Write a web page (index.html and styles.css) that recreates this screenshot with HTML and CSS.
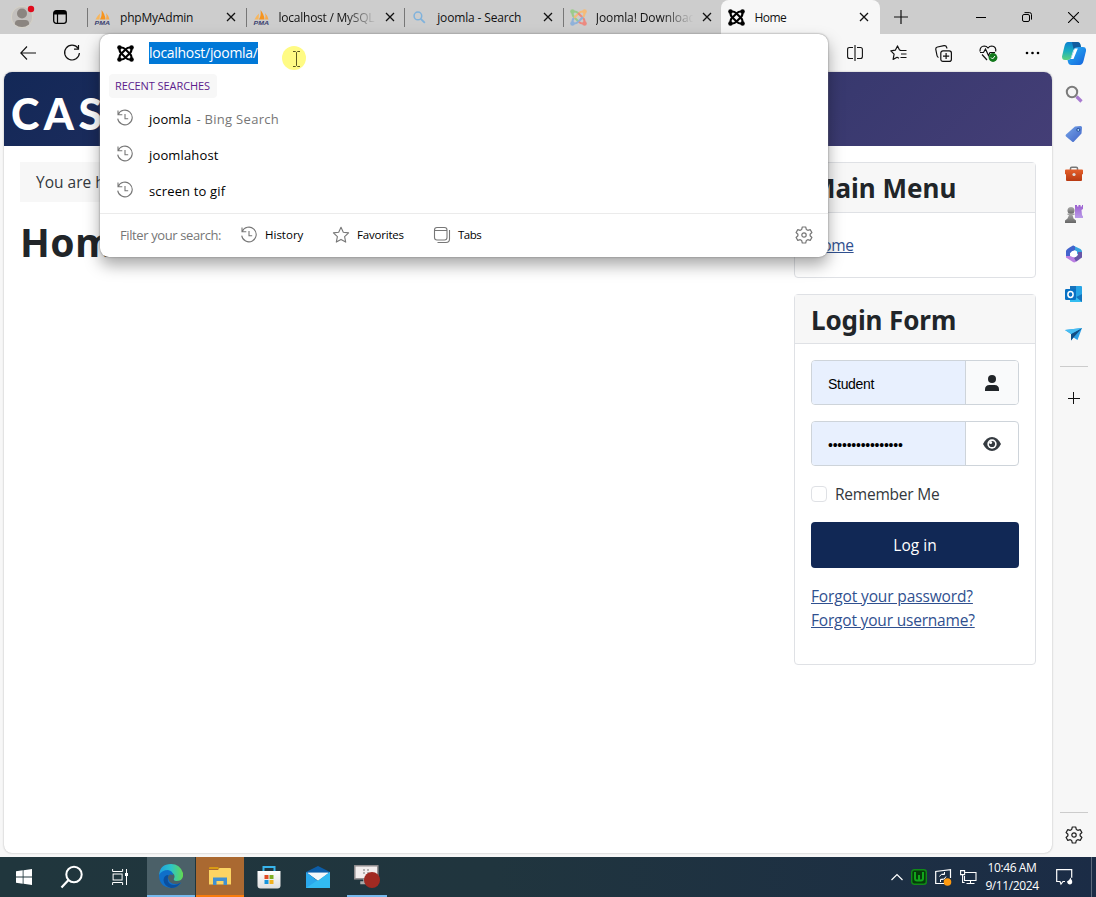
FILE: index.html
```html
<!DOCTYPE html>
<html lang="en">
<head>
<meta charset="utf-8">
<title>Home</title>
<link rel="stylesheet" href="styles.css">
</head>
<body>
<svg class="defs" aria-hidden="true">
  <defs>
    <symbol id="close" viewBox="0 0 10 10"><path d="M1 1l8 8M9 1l-8 8" fill="none" stroke="#111" stroke-width="1.3"/></symbol>
    <symbol id="joomla" viewBox="0 0 16 16">
      <g fill="none" stroke-width="1.9">
        <path d="M2.500 2.500Q1.800 5.600 3.700 7.500L8.500 12.300" stroke="var(--j1,#000)"/>
        <path d="M13.500 2.500Q10.400 1.800 8.500 3.700L3.700 8.500" stroke="var(--j2,#000)"/>
        <path d="M13.500 13.500Q14.200 10.400 12.300 8.500L7.500 3.700" stroke="var(--j3,#000)"/>
        <path d="M2.500 13.500Q5.600 14.200 7.500 12.300L12.300 7.500" stroke="var(--j4,#000)"/>
        <path d="M2.500 2.500Q5.600 1.800 7.500 3.700" stroke="var(--j1,#000)"/>
        <path d="M13.500 2.500Q14.200 5.600 12.300 7.500" stroke="var(--j2,#000)"/>
        <path d="M13.500 13.500Q10.400 14.200 8.500 12.300" stroke="var(--j3,#000)"/>
        <path d="M2.500 13.500Q1.800 10.400 3.700 8.500" stroke="var(--j4,#000)"/>
      </g>
      <circle cx="2.300" cy="2.300" r="2.100" fill="var(--j1,#000)"/><circle cx="13.700" cy="2.300" r="2.100" fill="var(--j2,#000)"/>
      <circle cx="13.700" cy="13.700" r="2.100" fill="var(--j3,#000)"/><circle cx="2.300" cy="13.700" r="2.100" fill="var(--j4,#000)"/>
    </symbol>
    <symbol id="pma" viewBox="0 0 17 17">
      <path d="M1.500 10.500Q3 7 6 4.500L5.500 10.500z" fill="#f8b65c"/><path d="M6 10.500Q8.500 6 7.500 1Q11 5 11.500 10.500z" fill="#f7941d"/><path d="M12 10.500Q13 7 12 4Q15 7 15.500 10.500z" fill="#f8a94a"/>
      <text x="0.500" y="15.500" font-family="Liberation Sans" font-size="6" font-weight="bold" font-style="italic" textLength="15.500" lengthAdjust="spacingAndGlyphs" fill="#3a3f70">PMA</text>
    </symbol>
    <symbol id="history" viewBox="0 0 18 18">
      <path d="M2.200 5.600A7.300 7.300 0 1 1 1.700 9.600M2 1.500v4.300h4.300M9 5v4.700h3.200" fill="none" stroke="#777" stroke-width="1.100"/>
    </symbol>
    <symbol id="gear" viewBox="0 0 18 18">
      <path d="M7.300 1h3.400l.6 2.400 1.500.9 2.400-.7 1.700 2.900-1.800 1.700v1.600l1.800 1.700-1.700 2.900-2.400-.7-1.500.9-.6 2.400H7.300l-.6-2.400-1.500-.9-2.400.7-1.700-2.900 1.800-1.700V8.200L1.100 6.500l1.700-2.900 2.400.7 1.500-.9z" fill="none" stroke="currentColor" stroke-width="1.200" stroke-linejoin="round"/>
      <circle cx="9" cy="9" r="2.200" fill="none" stroke="currentColor" stroke-width="1.200"/>
    </symbol>
    <linearGradient id="gCop1" x1="0" y1="0" x2="0" y2="1"><stop offset="0" stop-color="#0b7fd0"/><stop offset=".5" stop-color="#19aec0"/><stop offset="1" stop-color="#5fd37c"/></linearGradient>
    <linearGradient id="gCop2" x1="0" y1="0" x2="1" y2="1"><stop offset="0" stop-color="#28b8f5"/><stop offset="1" stop-color="#1560dc"/></linearGradient>
    <linearGradient id="gTag" x1="0" y1="0" x2="1" y2="1"><stop offset="0" stop-color="#77a6e8"/><stop offset="1" stop-color="#3f63c8"/></linearGradient>
    <linearGradient id="gRed" x1="0" y1="0" x2="0" y2="1"><stop offset="0" stop-color="#e4602b"/><stop offset="1" stop-color="#b83a12"/></linearGradient>
    <linearGradient id="gPawn" x1="0" y1="0" x2="0" y2="1"><stop offset="0" stop-color="#aaa"/><stop offset="1" stop-color="#666"/></linearGradient>
    <linearGradient id="gRook" x1="0" y1="0" x2="0" y2="1"><stop offset="0" stop-color="#9b5fd0"/><stop offset="1" stop-color="#b99be8"/></linearGradient>
    <linearGradient id="gEdge" x1="0" y1="0" x2="1" y2="0"><stop offset="0" stop-color="#1e9fe0"/><stop offset=".5" stop-color="#2dc4c9"/><stop offset="1" stop-color="#63d94f"/></linearGradient>
    <linearGradient id="gBag" x1="0" y1="0" x2="0" y2="1"><stop offset="0" stop-color="#fff"/><stop offset="1" stop-color="#ddd"/></linearGradient>
  </defs>
</svg>

<div class="browser">
  <div class="tabstrip">
    <div class="profile"><svg width="26" height="24" viewBox="0 0 26 24"><circle cx="11" cy="12" r="10.700" fill="#c3c0bd" stroke="#d6d3c8"/><circle cx="11" cy="8.500" r="5" fill="#8b8580"/><path d="M4 19.500Q3.500 15 7.500 15h7Q18.500 15 18 19.500 11 24.500 4 19.500z" fill="#8b8580"/><circle cx="20" cy="4" r="3.200" fill="#e00b1c"/></svg></div>
    <div class="workspaces"><svg width="14" height="14" viewBox="0 0 14 14"><rect x=".7" y=".7" width="12.600" height="12.600" rx="2.500" fill="none" stroke="#000" stroke-width="1.300"/><path d="M1 1h12v3.500H1z"/><path d="M4.500 4v9" stroke="#000" stroke-width="1.200"/></svg></div>
    <div class="tab"><svg class="fav"><use href="#pma"/></svg><span class="title t1">phpMyAdmin</span><svg class="x"><use href="#close"/></svg></div>
    <div class="tab"><svg class="fav"><use href="#pma"/></svg><span class="title fade t2">localhost / MySQL</span><svg class="x"><use href="#close"/></svg></div>
    <div class="tab"><svg class="fav" viewBox="0 0 16 16"><circle cx="6.500" cy="6.500" r="3.600" fill="none" stroke="#7fb2dc" stroke-width="1.400"/><path d="M9.200 9.200L13 13" stroke="#7fb2dc" stroke-width="1.700"/></svg><span class="title t3">joomla - Search</span><svg class="x"><use href="#close"/></svg></div>
    <div class="tab"><svg class="fav color"><use href="#joomla"/></svg><span class="title fade t4">Joomla! Download</span><svg class="x"><use href="#close"/></svg></div>
    <div class="tab active"><svg class="fav"><use href="#joomla"/></svg><span class="title t5">Home</span><svg class="x"><use href="#close"/></svg></div>
    <div class="newtab"><svg width="14" height="14" viewBox="0 0 14 14"><path d="M7 0v14M0 7h14" stroke="#111" stroke-width="1.200"/></svg></div>
    <div class="winctl">
      <svg width="10" height="10" viewBox="0 0 10 10"><path d="M0 5.500h10" stroke="#000"/></svg>
      <svg width="10" height="10" viewBox="0 0 10 10"><rect x=".5" y="2.500" width="7" height="7" rx="1.500" fill="none" stroke="#000"/><path d="M2.500.6h5q2 0 2 2v5" fill="none" stroke="#000"/></svg>
      <svg width="11" height="11" viewBox="0 0 10 10"><path d="M0 0l10 10M10 0L0 10" stroke="#000"/></svg>
    </div>
  </div>

  <div class="body">
    <div class="main">
      <div class="toolbar">
        <svg width="16" height="14" viewBox="0 0 16 14"><path d="M7 .5L.8 7 7 13.500M.8 7H16" fill="none" stroke="#111" stroke-width="1.100"/></svg>
        <svg class="reload" width="18" height="18" viewBox="0 0 18 18"><path d="M15 4.200A7.400 7.400 0 1 0 16.400 9M15.500 1v4.200H11" fill="none" stroke="#111" stroke-width="1.200"/></svg>
        <div class="tools">
          <svg width="16" height="16" viewBox="0 0 16 16"><path d="M6 2.500H2.500Q.6 2.500.6 4.500v7q0 2 1.900 2H6M10 2.500h3.500q1.900 0 1.900 2v7q0 2-1.900 2H10M8 0v16" fill="none" stroke="#111" stroke-width="1.100"/></svg>
          <svg width="17" height="16" viewBox="0 0 17 16"><path d="M11 5.300L9.500 5 7.500.9 5.300 5.200.8 5.800l3.300 3.300-1 5.300 4-2.100L9 13.300M10 5.500h6.500M11 9h5.500M10.500 12.500h6" fill="none" stroke="#111" stroke-width="1.200" stroke-linejoin="round"/></svg>
          <svg width="17" height="17" viewBox="0 0 17 17"><rect x="5.800" y="5.800" width="10.600" height="10.600" rx="2.200" fill="none" stroke="#111" stroke-width="1.200"/><path d="M11.100 8v6M8 11.100h6.200M3.500 12.500Q2.300 12 2 10.500L.8 4.500Q.5 2.400 2.500 2L9 .7Q11.200.4 11.700 2.500l.2 1" fill="none" stroke="#111" stroke-width="1.200"/></svg>
          <svg width="19" height="17" viewBox="0 0 19 17"><path d="M1 6.500Q.8 1.200 5.300 1 7.500 1 9 3 10.500 1 12.700 1 17.500 1.300 16.700 6.500M3 9.500l5 5.500M1 7.500h3.500L6.500 4l3 6.500L11 7.500h5" fill="none" stroke="#111" stroke-width="1.200"/><circle cx="14" cy="12.500" r="4.400" fill="#12791c"/><path d="M12 12.500l1.500 1.500 2.500-3" fill="none" stroke="#fff"/></svg>
          <svg width="15" height="16" viewBox="0 0 15 16"><circle cx="2" cy="8" r="1.300"/><circle cx="7.500" cy="8" r="1.300"/><circle cx="13" cy="8" r="1.300"/></svg>
        </div>
      </div>

      <div class="page">
        <header class="banner"><span class="brand">CAS</span></header>
        <div class="columns">
          <main class="article">
            <div class="crumb">You are here:</div>
            <h1>Home</h1>
          </main>
          <aside>
            <section class="card menu">
              <h3 class="mm">Main Menu</h3>
              <div class="cardbody"><a class="homelink">Home</a></div>
            </section>
            <section class="card login">
              <h3 class="lf">Login Form</h3>
              <div class="cardbody">
                <div class="group"><div class="field">Student</div><div class="addon grey"><svg width="14" height="16" viewBox="0 0 14 16"><circle cx="7" cy="4" r="4" fill="#212529"/><path d="M0 16v-1.500Q0 10 4.500 10h5q4.500 0 4.500 4.500V16z" fill="#212529"/></svg></div></div>
                <div class="group"><div class="field pw">••••••••••••••••</div><div class="addon"><svg width="18" height="14" viewBox="0 0 18 14"><path d="M9 0Q14.500 0 18 7 14.500 14 9 14 3.500 14 0 7 3.500 0 9 0z" fill="#353b41"/><circle cx="9" cy="7" r="4.700" fill="#fff"/><circle cx="9" cy="7" r="3.100" fill="#353b41"/><circle cx="7.600" cy="5.600" r="1.500" fill="#fff"/></svg></div></div>
                <div class="remember"><i></i><span>Remember Me</span></div>
                <div class="button">Log in</div>
                <div class="links"><a class="fp">Forgot your password?</a><a class="fu">Forgot your username?</a></div>
              </div>
            </section>
          </aside>
        </div>
      </div>
    </div>

    <div class="sidebar">
      <svg class="copilot" width="24" height="23" viewBox="0 0 24 23"><path d="M6 0h9q3 0 3.500 3l.7 3H14q-2 0-3 3l-2.500 8Q7.500 18 5 18H3Q0 18 0 14.500L2.500 4Q3.500 0 6 0z" fill="url(#gCop1)"/><path d="M10 0h5q3 0 3.500 3l.7 3H14q-2 0-2.500 1z" fill="#125c9e"/><path d="M19 5h2q3.500 0 3 4l-2.500 10q-1 4-4 4H9.500Q6.500 23 6 20l-.5-2Q8.500 18 9.500 15l3-8Q13 5 15.500 5z" fill="url(#gCop2)"/><path d="M12.800 6.500h3L11.500 17H8.500q1-1 1.500-3z" fill="#fff"/></svg>
      <svg width="18" height="18" viewBox="0 0 18 18"><path d="M11.500 11.500l5 5" stroke="#a87bd0" stroke-width="3.200"/><circle cx="7" cy="7" r="5.200" fill="#f4f4f4" stroke="#7b7b7b" stroke-width="2"/></svg>
      <svg width="18" height="18" viewBox="0 0 18 18"><path d="M10 1.500l5.500-.5q1.500 0 1.500 1.500l-.5 6-7.500 8Q8 17.500 7 16.500L1 11.500Q0 10.500 1 9.500z" fill="url(#gTag)"/><circle cx="13.300" cy="4.900" r="1.500" fill="#a9d8ff" stroke="#234b96"/></svg>
      <svg width="18" height="18" viewBox="0 0 18 18"><path d="M5.500 5V3.500q0-1.300 1.300-1.300h4.400q1.300 0 1.300 1.300V5" fill="none" stroke="#777" stroke-width="1.500"/><path d="M1 4.500h16q1 0 1 1V9l-1 .5V15q0 1-1 1H2q-1 0-1-1V9.500L0 9V5.500q0-1 1-1z" fill="url(#gRed)"/><circle cx="9" cy="9.500" r="1.600" fill="#ddd"/></svg>
      <svg width="18" height="18" viewBox="0 0 18 18"><path d="M10 0h2v1.500h1.500V0h2v1.500H17V0h1v4l-1.500 1L17 10l1 1.500V13h-8z" fill="url(#gRook)"/><circle cx="6" cy="5.500" r="3.500" fill="url(#gPawn)"/><path d="M2.500 8.500h7V10h-2l1 3.500 2.500 2V18H0v-2.500l2.500-2L4 10H2.500z" fill="url(#gPawn)"/></svg>
      <svg width="18" height="18" viewBox="0 0 18 18"><path d="M8 .5L15.500 4q1.500 1 1.500 2.500v5L12 9V6.500L8 4z" fill="#38a3df"/><path d="M8 .5Q1 4 1 6v6l4 1V8l5-3V1.500z" fill="#4263cc"/><path d="M1 11v1.500L8 17q1 .8 2.500 0l4-2.500L9 12l-4-1z" fill="#bb7fe2"/><path d="M17 7v5.500l-6 4L9 13l4-3V7z" fill="#6856a7"/><circle cx="9" cy="9" r="3.200" fill="#fff"/></svg>
      <svg width="18" height="18" viewBox="0 0 18 18"><rect x="5" y="1" width="12" height="16" rx="1" fill="#27a5e6"/><path d="M5 1h6v5H5z" fill="#1773bc"/><path d="M5 9l6 3 6-3v8H5z" fill="#33bdf1"/><path d="M11 12l6 5V9z" fill="#1474be"/><rect x="0" y="4" width="11" height="11" rx="1.200" fill="#0871c4"/><ellipse cx="5.500" cy="9.500" rx="2.600" ry="2.900" fill="none" stroke="#fff" stroke-width="1.500"/></svg>
      <svg width="18" height="18" viewBox="0 0 18 18"><path d="M0 5l17-2-4.500 12-4-2.500L6 15.500V9z" fill="#2c9ee5"/><path d="M6 9l11-6-8.500 9.500-2.500 3z" fill="#124d84"/><path d="M0 5l17-2L6 9z" fill="#48bdf2"/></svg>
      <hr>
      <svg class="add" width="12" height="12" viewBox="0 0 12 12"><path d="M5.500 0v12M0 6.500h12" stroke="#111"/></svg>
      <hr class="bottomline">
      <svg class="settings" width="18" height="18"><use href="#gear"/></svg>
    </div>
  </div>
</div>

<div class="popup">
  <div class="address"><svg width="17" height="17"><use href="#joomla"/></svg><span class="sel">localhost/joomla/</span></div>
  <div class="recent">RECENT SEARCHES</div>
  <div class="hit"><svg width="18" height="18"><use href="#history"/></svg><span class="h1t">joomla</span><span class="via">- Bing Search</span></div>
  <div class="hit"><svg width="18" height="18"><use href="#history"/></svg><span class="h2t">joomlahost</span></div>
  <div class="hit"><svg width="18" height="18"><use href="#history"/></svg><span class="h3t">screen to gif</span></div>
  <div class="filters">
    <span class="label">Filter your search:</span>
    <div class="chip c-history"><svg width="18" height="18"><use href="#history"/></svg><span class="f1">History</span></div>
    <div class="chip c-fav"><svg width="18" height="18" viewBox="0 0 18 18"><path d="M9 1.300l2.300 5 5.300.6-4 3.700 1.100 5.500L9 13.400l-4.700 2.700 1.100-5.500-4-3.700 5.300-.6z" fill="none" stroke="#777" stroke-width="1.100" stroke-linejoin="round"/></svg><span class="f2">Favorites</span></div>
    <div class="chip"><svg width="18" height="18" viewBox="0 0 18 18"><rect x="1.500" y="1.500" width="12.500" height="12.500" rx="2.500" fill="none" stroke="#777" stroke-width="1.100"/><path d="M1.500 4.500H14M16.500 4v9q0 3.500-3.500 3.500H4.500" fill="none" stroke="#777" stroke-width="1.100"/></svg><span class="f3">Tabs</span></div>
    <svg class="cog" width="18" height="18"><use href="#gear"/></svg>
  </div>
</div>
<div class="pointer"><svg width="24" height="24" viewBox="0 0 24 24"><circle cx="12" cy="12" r="12" fill="#fffb84"/><path d="M11 5.500h2.500l1 1 1-1H18M11 20.500h2.500l1-1 1 1H18M14.500 6.500v13" fill="none" stroke="#5c5a20"/></svg></div>

<div class="taskbar">
  <div class="slot plain"><svg width="16" height="16" viewBox="0 0 16 16"><path d="M0 2.300L6.700 1.300V7.600H0zM7.500 1.200L16 0v7.600H7.500zM0 8.400h6.700v6.300L0 13.700zM7.500 8.400H16V16l-8.500-1.200z" fill="#fff"/></svg></div>
  <div class="slot plain"><svg width="24" height="24" viewBox="0 0 24 24"><circle cx="14" cy="9.500" r="7.700" fill="none" stroke="#fff" stroke-width="2"/><path d="M8.500 15L1.500 22.500" stroke="#fff" stroke-width="2.200"/></svg></div>
  <div class="slot plain"><svg width="16" height="16" viewBox="0 0 16 16"><path d="M.6 0v2.500h10V0M.6 16v-2.500h10V16" fill="none" stroke="#fff"/><rect x="1.100" y="5" width="9" height="6" fill="none" stroke="#fff"/><path d="M14.500 0v16" stroke="#fff"/><path d="M13 4h3v3h-3z" fill="#fff"/></svg></div>
  <div class="slot edge"><svg width="24" height="24" viewBox="0 0 24 24"><path d="M0 11Q1 0 12 0 21 0 24 9q1 8-7 8-3-.5-2-2.500 1.500-3-1-5Q8 6 0 11z" fill="url(#gEdge)"/><path d="M0 11Q3 6 9 6q5 1 5 5Q9 9 9 14q1 6 8 6 3 0 5.500-1.500Q18 24 12 24 0 23 0 11z" fill="#0f6fc9"/><path d="M9.500 11Q7 18 12 20.500q5 1.500 10-2Q18 24 12 24 5 22 4.500 16 5 11 9.500 11z" fill="#0b4f9e"/></svg></div>
  <div class="slot files"><svg width="22" height="18" viewBox="0 0 22 18"><path d="M0 1q0-1 1-1h8l1.500 2H0z" fill="#d99a12"/><path d="M0 3h9l1.500-2H21q1 0 1 1v15.500H0z" fill="#fcd462"/><path d="M4 18v-7.500h14V18h-3.500v-4h-7v4z" fill="#4190d0"/></svg></div>
  <div class="slot"><svg width="24" height="24" viewBox="0 0 24 24"><path d="M6.500 6V2h11v4" fill="none" stroke="#38b5ec" stroke-width="2"/><path d="M.5 6h23v14.500q0 3-3 3h-17q-3 0-3-3z" fill="url(#gBag)"/><path fill="#e14b24" d="M7.500 10h4v4h-4z"/><path fill="#7dae22" d="M12.500 10h4v4h-4z"/><path fill="#1694dc" d="M7.500 15h4v4h-4z"/><path fill="#f2b11d" d="M12.500 15h4v4h-4z"/></svg></div>
  <div class="slot"><svg width="24" height="22" viewBox="0 0 24 22"><path d="M0 6L12 0l12 6v6H0z" fill="#0c5da8"/><path d="M0 6l12 9L24 6v16H0z" fill="#2aa8ec"/><path d="M1.500 6.700h21L12 14.500z" fill="#f4f8fb"/><path d="M24 6L0 22h24z" fill="#36c1f5" opacity=".75"/><path d="M1.500 6.700h21L12 14.500z" fill="#f4f8fb"/></svg></div>
  <div class="slot rec"><svg width="26" height="24" viewBox="0 0 26 24"><rect x=".8" y="1.800" width="23" height="13" fill="#f3eeee" stroke="#938f91" stroke-width="1.500"/><path d="M10 15v3H7v1.500h7" fill="none" stroke="#aaa" stroke-width="1.500"/><path d="M10 5v5M14 5v5" stroke="#777" stroke-dasharray="2 1"/><circle cx="18" cy="16" r="8" fill="#a12a22"/></svg></div>
  <div class="tray">
    <svg width="12" height="8" viewBox="0 0 12 8"><path d="M.5 7L6 1.500 11.500 7" fill="none" stroke="#fff" stroke-width="1.200"/></svg>
    <svg width="16" height="16" viewBox="0 0 16 16"><rect x=".7" y=".7" width="14.600" height="14.600" rx="2.500" fill="#063a0a" stroke="#108b17" stroke-width="1.400"/><path d="M4 3v6.500q0 2 2 2h4q2 0 2-2V3M8 6v5" fill="none" stroke="#11a51a" stroke-width="2"/></svg>
    <svg width="17" height="17" viewBox="0 0 17 17"><path d="M10 14.500H.7v-12L15.500.7V9" fill="none" stroke="#fff" stroke-width="1.200"/><path d="M4.500 7.500q1-3 5-2.500M9.500 3v2.500H7M11 7.500q-1 3.500-5 3M5.500 13v-2.700H8" fill="none" stroke="#fff"/><circle cx="12.500" cy="13" r="3.800" fill="#ff9a10"/></svg>
    <svg width="17" height="14" viewBox="0 0 17 14"><path d="M5 2.500h11v8H4.500V6M10.500 10.500v3M6.500 13.500h8" fill="none" stroke="#fff" stroke-width="1.100"/><path d="M.6.6h4v4h-4zM2.600 4.500v8h2" fill="none" stroke="#fff" stroke-width="1.100"/></svg>
    <div class="clock"><span class="c1">10:46 AM</span><span class="c2">9/11/2024</span></div>
    <svg class="note" width="17" height="17" viewBox="0 0 17 17"><path d="M9 12.500H7l-2 2.500-1-2.500H.7V.7h15v8" fill="none" stroke="#fff" stroke-width="1.200"/><path d="M14.500 8.500q-1 3-3.500 4 .5 3 3 3 3-.5 2-4-1-1-1.500-3z" fill="#fff"/></svg>
    <i class="peek"></i>
  </div>
</div>
</body>
</html>
```
FILE: styles.css
```css
* { box-sizing: border-box; }
body { margin: 0; width: 1096px; height: 897px; overflow: hidden; font-family: "Open Sans", "Noto Sans", sans-serif; color: #111; background: #f7f7f7; }
svg { display: block; flex: none; }
span, a { white-space: nowrap; }
.defs { position: absolute; width: 0; height: 0; }
.browser { height: 857px; display: flex; flex-direction: column; }

.tabstrip { height: 34px; background: #cdcdcd; display: flex; align-items: center; font-size: 12px; }
.profile { width: 49px; padding-left: 11px; }
.workspaces { width: 38px; padding-left: 4px; }
.tab { width: 158.600px; height: 34px; display: flex; align-items: center; position: relative; padding: 0 9.500px 0 7px; }
.tab:not(.active)::before { content: ""; position: absolute; left: 0; top: 8px; width: 1px; height: 19px; background: #777; }
.fav { width: 17px; height: 17px; margin-right: 9px; }
.title { flex: 1; letter-spacing: -.2px; }
.fade { -webkit-mask-image: linear-gradient(90deg, #000 62%, transparent 92%); mask-image: linear-gradient(90deg, #000 62%, transparent 92%); }
.t2 { letter-spacing: -.25px; }
.t3 { letter-spacing: -.150px; }
.t4 { letter-spacing: -.1px; }
.t5 { letter-spacing: -.5px; }
.x { width: 10px; height: 10px; }
.color { --j1: #9bcb8b; --j2: #f5bb78; --j3: #ec8a80; --j4: #8fb2da; }
.active { background: #f7f7f7; border-radius: 8px 8px 0 0; padding-right: 10.500px; }
.newtab { padding-left: 14px; width: 96px; }
.winctl { display: flex; align-items: center; gap: 36px; }

.body { flex: 1; display: flex; min-height: 0; }
.main { width: 1052px; padding-left: 4px; display: flex; flex-direction: column; }
.toolbar { height: 38px; display: flex; align-items: center; padding-left: 16px; }
.reload { margin-left: 27px; }
.tools { display: flex; align-items: center; gap: 27.200px; margin-left: auto; padding-right: 12px; }
.page { height: 781px; background: #fff; border-radius: 8px; overflow: hidden; box-shadow: 0 0 2px #aaa; }
.banner { height: 74px; padding-left: 7px; background: linear-gradient(135deg, #132857 0%, #443e76 100%); display: flex; align-items: center; }
.brand { font: 900 43px/74px Lato, sans-serif; color: #fff; letter-spacing: 4.500px; padding-top: 9px; }
.columns { display: flex; justify-content: space-between; padding: 16px; }
.article { width: 758px; }
.crumb { height: 40px; background: #f7f7f7; padding-left: 16px; line-height: 40px; font-size: 15.500px; color: #33383d; }
h1 { margin: 13px 0 0; font: bold 39px/54px "Noto Sans", sans-serif; letter-spacing: .5px; color: #212529; }
aside { width: 242px; display: flex; flex-direction: column; gap: 16px; }
.card { border: 1px solid #dfe1e5; border-radius: 4px; }
.menu { height: 116px; }
.login { height: 371px; }
.card h3 { margin: 0; height: 50px; padding-left: 16px; background: #f7f7f7; border-bottom: 1px solid #dfe1e5; font: bold 26px/51px "Noto Sans", sans-serif; color: #212529; white-space: nowrap; }
.card .lf { height: 49px; letter-spacing: -.1px; }
.cardbody { padding: 16px; font-size: 15.500px; line-height: 24px; }
.menu .cardbody { padding-top: 20px; }
.cardbody a { color: #30508f; text-decoration: underline; display: table; }
.homelink { letter-spacing: -.3px; }
.fp { letter-spacing: -.130px; }
.fu { letter-spacing: -.190px; }
.group { height: 45px; display: flex; border: 1px solid #ced4da; border-radius: 4px; margin-bottom: 16px; overflow: hidden; }
.field { width: 154px; padding-left: 16px; background: #e8f0fe; border-right: 1px solid #ced4da; font: 14px/46px "Liberation Sans", Arial, sans-serif; color: #000; letter-spacing: -.3px; }
.pw { letter-spacing: -.240px; }
.addon { flex: 1; display: flex; align-items: center; justify-content: center; }
.grey { background: #f9fafb; }
.remember { display: flex; align-items: center; height: 24px; margin-bottom: 16px; gap: 8px; color: #33383d; letter-spacing: -.220px; }
.remember i { width: 16px; height: 16px; border: 1px solid #dfe1e5; border-radius: 4px; }
.button { height: 46px; line-height: 47px; text-align: center; background: #112855; color: #fff; border-radius: 4px; margin-bottom: 16px; font-size: 15.500px; }

.sidebar { width: 44px; display: flex; flex-direction: column; align-items: center; padding: 8px 0 0; gap: 22px; }
.sidebar .copilot { margin-bottom: -2px; }
.sidebar hr { width: 28px; height: 1px; border: 0; background: #ccc; margin: 1px 0 0; }
.sidebar .add { margin-top: 3px; }
.sidebar .bottomline { margin-top: auto; margin-bottom: -9px; }
.sidebar .settings { margin-bottom: 13px; color: #222; }

.popup { position: absolute; left: 100px; top: 34px; width: 728px; height: 223px; background: #fff; border-radius: 9px; box-shadow: 0 0 2px #777, 0 8px 16px rgba(0,0,0,.35); display: flex; flex-direction: column; font-size: 13px; color: #000; }
.address { height: 38px; padding-left: 17px; display: flex; align-items: center; gap: 15px; }
.sel { background: #0078d7; color: #fff; height: 22px; line-height: 21px; font-size: 14px; letter-spacing: -.290px; }
.recent { margin: 2px 0 3px 9px; width: 108px; height: 24px; padding-left: 6px; line-height: 24px; background: #f7f7f7; border-radius: 4px; color: #5c1b8c; font-size: 11px; font-weight: 500; letter-spacing: -.080px; white-space: nowrap; }
.hit { height: 36px; padding-left: 16px; display: flex; align-items: center; }
.hit svg { margin-right: 15px; margin-top: -2px; }
.h1t, .h2t, .h3t { letter-spacing: .150px; }
.via { color: #767676; margin-left: 5px; letter-spacing: .3px; }
.filters { height: 44px; margin-top: 4px; border-top: 1px solid #ebebeb; padding: 0 15px 2px 20px; display: flex; align-items: center; font-size: 11.500px; }
.filters .label { color: #767676; font-size: 13px; letter-spacing: -.390px; width: 120px; }
.chip { display: flex; align-items: center; gap: 7px; }
.c-history { width: 92px; }
.c-fav { width: 101px; }
.f2 { letter-spacing: -.2px; }
.f3 { letter-spacing: -.5px; }
.filters .cog { margin: 0 0 0 auto; color: #777; }
.pointer { position: absolute; left: 282px; top: 46px; }

.taskbar { height: 40px; display: flex; background: linear-gradient(90deg, #20363d 0%, #20353e 45%, #1b2c46 100%); }
.slot { width: 48px; display: flex; align-items: center; justify-content: center; margin-right: 1px; }
.plain { margin-right: 0; }
.edge { background: #4b6068; border-bottom: 2px solid #76b9ed; margin-left: 3px; }
.files { background: #aa6931; border-bottom: 2px solid #f87b0c; }
.rec { width: 40px; margin-left: 4px; border-bottom: 2px solid #76b9ed; }
.tray { margin-left: auto; display: flex; align-items: center; color: #fff; padding-right: 4px; gap: 8px; }
.clock { display: flex; flex-direction: column; align-items: center; width: 54px; font-size: 12px; line-height: 18px; letter-spacing: -.400px; }
.note { margin-left: 9px; }
.peek { width: 1px; height: 40px; margin-left: 10px; background: #5d6a7c; }
```
